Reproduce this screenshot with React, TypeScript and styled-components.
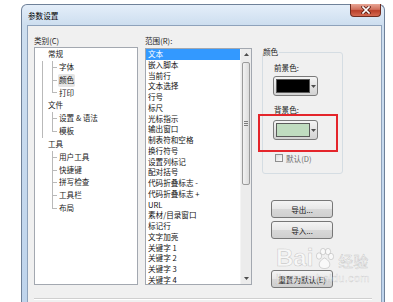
import styled, { createGlobalStyle } from 'styled-components';

const GlobalStyle = createGlobalStyle`
  html, body {
    margin: 0;
    padding: 0;
    background: #ffffff;
    overflow: hidden;
  }
  body {
    font-family: "Noto Sans CJK SC", "Liberation Sans", sans-serif;
    font-size: 7.6px;
    color: #1e1e1e;
  }
`;

const categories = [
  { name: '常规', children: ['字体', '颜色', '打印'] },
  { name: '文件', children: ['设置 & 语法', '模板'] },
  { name: '工具', children: ['用户工具', '快捷键', '拼写检查', '工具栏', '布局'] },
];

const ranges = [
  '文本', '嵌入脚本', '当前行', '文本选择', '行号', '标尺', '光标指示', '输出窗口',
  '制表符和空格', '换行符号', '设置列标记', '配对括号', '代码折叠标志 -', '代码折叠标志 +',
  'URL', '素材/目录窗口', '标记行', '文字加亮', '关键字 1', '关键字 2', '关键字 3', '关键字 4',
];

const Arrow = ({ down }: { down?: boolean }) => (
  <svg width="5" height="3" viewBox="0 0 5 3">
    <path d={down ? 'M0 0 L5 0 L2.5 3 Z' : 'M0 3 L5 3 L2.5 0 Z'} fill="#4d4d4d" />
  </svg>
);

const CloseGlyph = () => (
  <svg width="10" height="8" viewBox="0 0 10 8">
    <path d="M2 1 L8 7 M8 1 L2 7" stroke="#5b1c12" strokeWidth="3.2" strokeLinecap="square" />
    <path d="M2 1 L8 7 M8 1 L2 7" stroke="#ffffff" strokeWidth="1.7" strokeLinecap="square" />
  </svg>
);

const Paw = () => (
  <svg width="19" height="22" viewBox="0 0 19 22">
    <g fill="rgba(255,255,255,0.6)" stroke="rgba(120,120,120,0.35)" strokeWidth="0.8">
      <ellipse cx="4" cy="8" rx="2.6" ry="3.2" />
      <ellipse cx="8" cy="3.6" rx="2.6" ry="3.2" />
      <ellipse cx="13" cy="3.6" rx="2.6" ry="3.2" />
      <ellipse cx="16" cy="8.5" rx="2.6" ry="3.2" />
      <path d="M9.5 10 C5 12 3 16 5 19 C7 21 12 21 14 19 C16 16 14 12 9.5 10 Z" />
    </g>
  </svg>
);

function TreeChildren({ items, offset }: { items: string[]; offset: number }) {
  return (
    <ChildList $offset={offset}>
      {items.map((c, i) => (
        <ChildRow key={c}>
          <Connector $last={i === items.length - 1} />
          <ChildText $selected={c === '颜色'}>{c}</ChildText>
        </ChildRow>
      ))}
    </ChildList>
  );
}

export default function App() {
  const [general, file, tools] = categories;
  return (
    <Page>
      <GlobalStyle />
      <Window>
        <TitleBar>
          <Title>参数设置</Title>
          <CloseButton>
            <CloseGlyph />
          </CloseButton>
        </TitleBar>
        <Body>
          <Columns>
            <div>
              <Label>类别(C)</Label>
              <TreeBox>
                <RootRow>{general.name}</RootRow>
                <Spine>
                  <TreeChildren items={general.children} offset={9} />
                  <RootRow $inSpine>{file.name}</RootRow>
                  <TreeChildren items={file.children} offset={9} />
                </Spine>
                <RootRow>{tools.name}</RootRow>
                <TreeChildren items={tools.children} offset={17} />
              </TreeBox>
            </div>
            <div>
              <Label $gap>范围(R):</Label>
              <ListBox>
                <Items>
                  {ranges.map((r, i) => (
                    <Item key={r} $selected={i === 0}>
                      {r}
                    </Item>
                  ))}
                </Items>
                <ScrollBar>
                  <ScrollArrow>
                    <Arrow />
                  </ScrollArrow>
                  <Thumb>
                    <Grip />
                  </Thumb>
                  <Track />
                  <ScrollArrow>
                    <Arrow down />
                  </ScrollArrow>
                </ScrollBar>
              </ListBox>
            </div>
            <RightCol>
              <GroupBox>
                <Legend>颜色</Legend>
                <GroupInner>
                  <FieldLabel $top={5}>前景色:</FieldLabel>
                  <ColorButton $top={3}>
                    <Swatch $color="#000000" />
                    <DropPart>
                      <Arrow down />
                    </DropPart>
                  </ColorButton>
                  <FieldLabel $top={9}>背景色:</FieldLabel>
                  <ColorButton $top={5}>
                    <Swatch $color="#c0dcc0" />
                    <DropPart>
                      <Arrow down />
                    </DropPart>
                  </ColorButton>
                  <CheckRow>
                    <CheckBox />
                    <span>默认(D)</span>
                  </CheckRow>
                </GroupInner>
              </GroupBox>
              <Highlight />
              <PushButton $top={26}>导出...</PushButton>
              <PushButton $top={3}>导入...</PushButton>
              <PushButton $top={31}>重置为默认(E)</PushButton>
            </RightCol>
          </Columns>
          <Separator />
        </Body>
      </Window>
      <Watermark>
        <MarkTop>
          <BaiText>Bai</BaiText>
          <Paw />
          <JingText>经验</JingText>
        </MarkTop>
        <MarkUrl>jingyan.baidu.com</MarkUrl>
      </Watermark>
    </Page>
  );
}

const Page = styled.div`
  position: relative;
  box-sizing: border-box;
  height: 302px;
  padding: 4px 0 0 21px;
  overflow: hidden;
`;

const Window = styled.div`
  width: 364px;
  box-sizing: border-box;
  border: 1px solid #6f8199;
  border-bottom: none;
  border-radius: 6px 6px 0 0;
  padding: 0 2px 0 5px;
  background: linear-gradient(#e4eef9, #cddeef 20px, #bdd3ec);
`;

const TitleBar = styled.div`
  height: 20px;
  display: flex;
  align-items: center;
  padding-left: 1px;
`;

const Title = styled.span`
  font-size: 7.6px;
  color: #000;
`;

const CloseButton = styled.div`
  margin-left: auto;
  margin-right: 1px;
  align-self: flex-start;
  margin-top: -1px;
  width: 31px;
  height: 13px;
  box-sizing: border-box;
  border: 1px solid #6e2c20;
  border-top: none;
  border-radius: 0 0 4px 4px;
  background: linear-gradient(#e8a595, #d0705c 45%, #b9402a 55%, #d46a52);
  display: flex;
  align-items: center;
  justify-content: center;
`;

const Body = styled.div`
  border: 1px solid #8ea2bb;
  border-bottom: none;
  background: #f0f0f0;
  padding: 8px 0 30px 6px;
`;

const Columns = styled.div`
  display: grid;
  grid-template-columns: 104px 107px 1fr;
  column-gap: 7px;
`;

const Label = styled.div<{ $gap?: boolean }>`
  height: 13px;
  line-height: 13px;
  margin-bottom: ${(p) => (p.$gap ? 1 : 0)}px;
`;

const TreeBox = styled.div`
  height: 238px;
  box-sizing: border-box;
  border: 1px solid #a3a8b0;
  background: #fff;
  color: #1a1a1a;
`;

const RootRow = styled.div<{ $inSpine?: boolean }>`
  height: 12.85px;
  line-height: 12.85px;
  padding-left: ${(p) => (p.$inSpine ? 5 : 13)}px;
`;

const Spine = styled.div`
  margin-left: 7px;
  border-left: 1px solid #b9b9b9;
`;

const ChildList = styled.div<{ $offset: number }>`
  margin-left: ${(p) => p.$offset}px;
`;

const ChildRow = styled.div`
  height: 12.85px;
  display: flex;
  align-items: stretch;
`;

const Connector = styled.span<{ $last: boolean }>`
  width: 5px;
  background:
    linear-gradient(#b9b9b9, #b9b9b9) left top / 1px ${(p) => (p.$last ? '50%' : '100%')} no-repeat,
    linear-gradient(#b9b9b9, #b9b9b9) left center / 100% 1px no-repeat;
`;

const ChildText = styled.span<{ $selected: boolean }>`
  margin-left: 1px;
  padding: 0 1px;
  line-height: 12.85px;
  border-radius: 2px;
  background: ${(p) => (p.$selected ? '#e4e4e4' : 'transparent')};
`;

const ListBox = styled.div`
  height: 237px;
  box-sizing: border-box;
  border: 1px solid #a3a8b0;
  background: #fff;
  display: flex;
  overflow: hidden;
`;

const Items = styled.div`
  flex: 1;
`;

const Item = styled.div<{ $selected: boolean }>`
  height: 10.75px;
  line-height: 10.75px;
  padding-left: 2px;
  white-space: nowrap;
  color: ${(p) => (p.$selected ? '#fff' : '#111')};
  background: ${(p) => (p.$selected ? '#3399ff' : 'transparent')};
`;

const ScrollBar = styled.div`
  width: 10px;
  display: flex;
  flex-direction: column;
  background: #ececec;
  border-left: 1px solid #f4f4f4;
`;

const ScrollArrow = styled.div`
  height: 11px;
  display: flex;
  align-items: center;
  justify-content: center;
`;

const Thumb = styled.div`
  margin: 2px 1px 0;
  height: 123px;
  box-sizing: border-box;
  border: 1px solid #9b9b9b;
  border-radius: 2px;
  background: linear-gradient(90deg, #f3f3f3, #dcdcdc);
  display: flex;
  align-items: center;
  justify-content: center;
`;

const Grip = styled.span`
  width: 4px;
  height: 5px;
  background: repeating-linear-gradient(#7d7d7d 0 1px, transparent 1px 2px);
`;

const Track = styled.div`
  flex: 1;
`;

const RightCol = styled.div`
  position: relative;
  display: flex;
  flex-direction: column;
  align-items: flex-start;
`;

const GroupBox = styled.fieldset`
  margin: 12px 0 0 3px;
  padding: 0 0 10px;
  width: 81px;
  box-sizing: border-box;
  border: 1px solid #d5dde3;
  border-radius: 3px;
`;

const Legend = styled.legend`
  padding: 0 1px 0 0;
  margin-left: 0;
  line-height: 12px;
  font-size: 7.6px;
`;

const GroupInner = styled.div`
  padding-left: 11px;
  display: flex;
  flex-direction: column;
  align-items: flex-start;
`;

const FieldLabel = styled.div<{ $top: number }>`
  margin-top: ${(p) => p.$top}px;
  line-height: 10px;
  height: 10px;
`;

const ColorButton = styled.div<{ $top: number }>`
  margin: ${(p) => p.$top}px 0 0 -1px;
  width: 45px;
  height: 20px;
  box-sizing: border-box;
  border: 1px solid #7a7a7a;
  border-radius: 3px;
  background: linear-gradient(#f5f5f5, #e3e3e3 50%, #d2d2d2);
  display: flex;
  align-items: stretch;
  padding: 2px 0 2px 2px;
`;

const Swatch = styled.div<{ $color: string }>`
  width: 34px;
  box-sizing: border-box;
  border: 1px solid #5a5a5a;
  background: ${(p) => p.$color};
`;

const DropPart = styled.div`
  flex: 1;
  display: flex;
  align-items: center;
  justify-content: center;
`;

const CheckRow = styled.div`
  margin-top: 13px;
  height: 10px;
  display: flex;
  align-items: center;
  gap: 3px;
  color: #6d6d6d;
`;

const CheckBox = styled.span`
  margin-left: 1px;
  width: 8px;
  height: 8px;
  box-sizing: border-box;
  border: 1px solid #8f8f8f;
  background: linear-gradient(135deg, #dcdcdc, #fafafa);
`;

const Highlight = styled.div`
  position: absolute;
  left: -1px;
  top: 80px;
  width: 80px;
  height: 38px;
  box-sizing: border-box;
  border: 2px solid #e4252b;
`;

const PushButton = styled.div<{ $top: number }>`
  margin: ${(p) => p.$top}px 0 0 12px;
  width: 62px;
  height: 18px;
  box-sizing: border-box;
  border: 1px solid #777;
  border-radius: 3px;
  background: linear-gradient(#f4f4f4, #e7e7e7 50%, #d8d8d8 51%, #cfcfcf);
  display: flex;
  align-items: center;
  justify-content: center;
  color: #1a1a1a;
`;

const Separator = styled.div`
  margin: 10px 9px 0 0;
  border-top: 1px solid #cfcfcf;
  border-bottom: 1px solid #ffffff;
`;

const Watermark = styled.div`
  position: absolute;
  left: 276px;
  top: 246px;
  pointer-events: none;
  display: flex;
  flex-direction: column;
  align-items: flex-start;
`;

const MarkTop = styled.div`
  display: flex;
  align-items: flex-end;
  gap: 2px;
`;

const BaiText = styled.span`
  font-family: "Liberation Sans", sans-serif;
  font-weight: bold;
  font-size: 24px;
  line-height: 24px;
  color: rgba(255, 255, 255, 0.55);
  -webkit-text-stroke: 0.6px rgba(120, 120, 120, 0.35);
`;

const JingText = styled.span`
  font-size: 15px;
  line-height: 18px;
  margin-left: 2px;
  color: rgba(255, 255, 255, 0.6);
  -webkit-text-stroke: 0.5px rgba(120, 120, 120, 0.35);
`;

const MarkUrl = styled.span`
  margin-top: 3px;
  font-family: "Liberation Sans", sans-serif;
  font-size: 11px;
  line-height: 11px;
  letter-spacing: 0.3px;
  color: rgba(255, 255, 255, 0.6);
  -webkit-text-stroke: 0.4px rgba(120, 120, 120, 0.3);
`;
